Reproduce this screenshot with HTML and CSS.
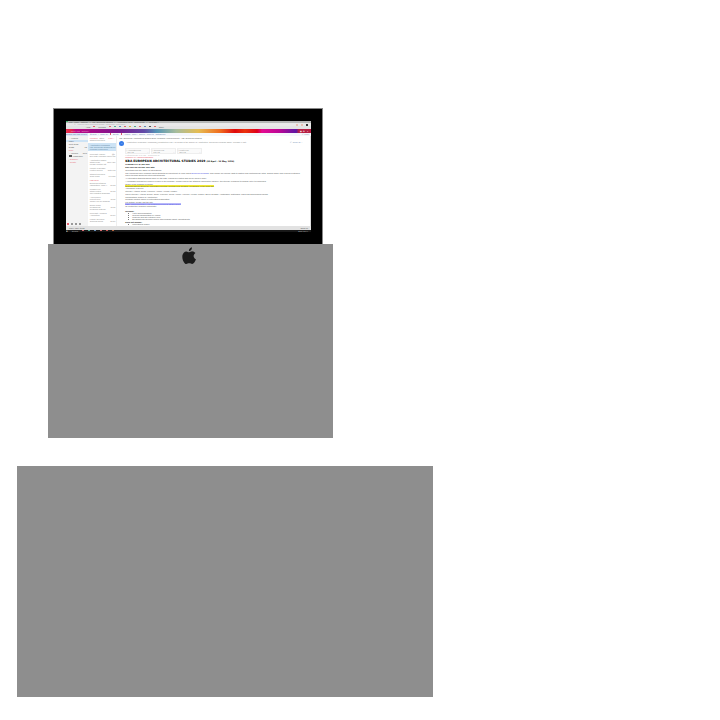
FILE: index.html
```html
<!DOCTYPE html>
<html lang="en">
<head>
<meta charset="utf-8">
<title>Mail on desktop</title>
<link rel="stylesheet" href="styles.css">
</head>
<body>
<main class="page">
<section class="computer">
<div class="monitor">
<div class="screen">
<div class="tabs"><i class="dot"></i><span>Mail - Inbox - Outlook &nbsp; × &nbsp; KBA European Studies &nbsp; × &nbsp; Architecture 2019 - Documents &nbsp; × &nbsp; New Tab ×</span></div>
<div class="address"><span>← → ↻ &nbsp; outlook.office.com/owa/?realm=mail&amp;path=/mail/inbox</span><span class="extensions"><i></i><i></i><i></i></span></div>
<div class="bookmarks"><span>Apps</span><i></i><span>Courses</span><i></i><i class="green"></i><i class="blue"></i><i></i><i class="yellow"></i><i class="green"></i><i></i><i class="blue"></i><i class="dark"></i><i></i><span>Other</span></div>
<div class="banner"><b>⠿</b><span>Office 365 &nbsp; Outlook</span><span class="tools">◉ &nbsp; ✿ &nbsp; ?</span></div>
<div class="commands"><span class="search">Search Mail and People</span><span>⊕ New &nbsp; | &nbsp; Reply all</span><i></i><span>Delete</span><i></i><span>Archive &nbsp; Junk | &nbsp; Sweep &nbsp; Move to &nbsp; Categories ···</span><span class="undo">↶ Undo</span></div>
<div class="mail">
<nav class="folders">
<p>⌄ Folders</p><p class="active">Inbox</p><p>Sent Items</p><p>Drafts <b>12</b></p><p class="red">More</p><p>⌄ Groups <b>New</b></p><p><i></i> Architecture</p><p>› <span class="red">Discover</span></p><p>› <span class="red">Create</span></p>
<div class="apps"><i class="red-bg"></i><i></i><i></i><i></i></div>
</nav>
<section class="list">
<h2><span>Focused</span> &nbsp; Other <b>Filter ⌄</b></h2>
<article><p>Student Services</p></article>
<article class="selected"><p>Architecture Programs</p><p>KBA European Studies <b>11:09</b></p><p>Program news 2019</p></article>
<article><p>University Library <b>▧ ▹</b></p><p>Due date reminder <b>Mon 9:15</b></p></article>
<article><p>Architecture Office</p><p>Studio plan <b>Sun 4:20</b></p><p>Please find the list</p></article>
<article><p>Faculty of Design</p><p>Lecture series <b>Sat 6:02</b></p></article>
<article><p>Student Services</p><p>Term news <b>Fri 3:55</b></p></article>
<h3>Last week</h3>
<article><p>European Studies</p><p>Information, room 4 <b>10/12</b></p></article>
<article><p>Michael Lee</p><p>Studio notes <b>10/12</b></p><p>The updated drawings</p></article>
<article><p>Anna Moore</p><p>Project files <b>10/11</b></p><p>Thank you for sending</p></article>
<article><p>Daniel Clark</p><p>Reading list <b>10/11</b></p><p>Required material</p></article>
<article><p>University Housing</p><p>Application <b>10/10</b></p></article>
<article><p>Library Services</p><p>Opening hours <b>10/10</b></p></article>
</section>
<article class="message">
<p class="subject">KBA European Architectural Studies 2019 (Program Announcement) - KBA European Studies</p>
<div class="sender"><i>A</i><p>Architecture Programs &lt;programs@architecture.edu&gt; on behalf of the School of Architecture, European Program Office, Tuesday 9 Oct</p><b>↶ Reply all ⌄</b></div>
<div class="files"><p>▯ Application.pdf<br>&nbsp; 240 KB <b>⌄</b></p><p>▯ Itinerary.pdf<br>&nbsp; 180 KB <b>⌄</b></p><p>▯ Poster.pdf<br>&nbsp; 320 KB <b>⌄</b></p></div>
<p class="small">3 attachments (740 KB) &nbsp; Download all</p>
<p class="alert">PROGRAM ANNOUNCEMENT</p>
<h1>KBA EUROPEAN ARCHITECTURAL STUDIES 2019 <small>(30 April - 24 May, 2019)</small></h1>
<p class="strong">Program Fee: $4,950 USD</p>
<p class="strong tight">DEPOSIT DEADLINE: Nov 30th</p>
<p class="line tight">Greetings from the Office of International</p>
<p class="line">The upcoming travel program offers students an opportunity to learn about <a href="#program">European buildings</a>. This course will include visits to historic and contemporary sites, guided walks, and a series of studies.</p>
<p class="line none">Travel through European cities with students.</p>
<p class="line">All interested students should apply by the date. Places are limited and will be filled in order.</p>
<p class="line">A refundable deposit will reserve a place in the program. Please read all the attached information carefully; the itinerary is subject to change until it is confirmed.</p>
<p class="line">Space in the program is limited.</p>
<p class="line none"><mark>Students should attend the information meeting. Meeting is on Tuesday, 16 October, in the main hall.</mark></p>
<p class="line none">Attendance required</p>
<p class="line">Itinerary: Athens, Rome, Florence, Venice, Vienna, Prague</p>
<p class="line">Travel Itinerary: Athens, Delphi, Rome, Florence, Siena, Venice, Vicenza, Vienna, Prague, Berlin, Dessau, Amsterdam, Rotterdam, Paris and surrounding regions.</p>
<p class="line">Coordinators: School of Architecture</p>
<p class="line none">Program contact: Office of International Education</p>
<p class="line">For details, please visit the site:</p>
<p class="line none"><a class="site" href="#apply">https://www.architecture.edu/programs/european-studies-2019</a></p>
<p class="line none">Or contact the program coordinator</p>
<p class="strong space">Includes:</p>
<ul><li>Hotel accommodation</li><li>Ground transportation by coach</li><li>Museum and site entrance fees</li><li>Breakfast and welcome dinner with program faculty and students</li></ul>
<p class="strong tight">Does not include:</p>
<ul><li>International airfare</li></ul>
</article>
</div>
<div class="status"><span>Inbox: 1204 items</span><span>Show all</span></div>
<div class="taskbar"><b>⊞</b><span>Search</span><i></i><i class="green"></i><i class="blue"></i><i></i><i class="red-bg"></i><i class="orange-bg"></i><span class="clock">ENG 12:44</span></div>
</div>
</div>
<div class="stand">
<svg class="apple" viewBox="0 0 14 17" role="img" aria-label="Apple"><path d="M9.800.2C10 2.200 8.600 4 6.800 4.100 6.500 2.300 8 .5 9.800.2Z"/><path d="M7 5.200C8 5.200 8.900 4.200 10.300 4.300c1.200 0 2.200.6 2.900 1.600-2.600 1.700-2.300 5 .5 6.200C12.900 14.500 11.500 16.700 10 16.700c-1.100 0-1.600-.7-2.900-.7-1.300 0-1.900.7-2.900.7C2.600 16.700.3 13 .3 9.500c0-3.300 2-5.200 4-5.200C5.500 4.300 6.400 5.200 7 5.200Z"/></svg>
</div>
</section>
<div class="panel"></div>
</main>
</body>
</html>
```
FILE: styles.css
```css
* { box-sizing: border-box; }
body { margin: 0; background: #fff; color: #555; font: 2px/2px "Liberation Sans", Arial, sans-serif; }
p, h1, h2, h3, ul { margin: 0; padding: 0; font-size: inherit; font-weight: normal; white-space: nowrap; }
i { font-style: normal; }
.page { padding-top: 15%; }
.computer { width: 39.600%; margin-left: 6.700%; }
.monitor { width: 94.800%; margin-left: 1.600%; aspect-ratio: 270 / 136; padding: 12px 11px 12px 12px; background: #000; border: 1px solid #888; border-bottom: 0; }
.screen { height: 100%; display: flex; flex-direction: column; overflow: hidden; background: #fff; }
.stand { background: #8e8e8e; aspect-ratio: 285 / 194; padding-top: 3px; }
.apple { display: block; width: 5%; margin-left: 47%; fill: #1b1b1b; }
.panel { width: 57.800%; margin: 28px 0 0 2.400%; aspect-ratio: 416 / 231; background: #8e8e8e; }
.tabs { height: 2px; background: #b5b7b6; color: #555; display: flex; gap: 1px; flex: none; white-space: nowrap; }
.dot { width: 2px; height: 1px; background: #47b96f; }
.address { height: 3px; flex: none; background: #e9e9e9; display: flex; justify-content: space-between; color: #aaa; padding: 0 3px; white-space: nowrap; }
.extensions { display: flex; gap: 3px; padding-top: 1px; }
.extensions i { width: 2px; height: 2px; background: #e8c2b4; }
.extensions i:last-child { background: #333; }
.red { color: #e66070; }
.bookmarks { height: 3px; flex: none; background: #e4e4e4; display: flex; gap: 3px; padding-left: 20px; }
.bookmarks i, .taskbar i { width: 2px; height: 1px; background: #d76b70; }
.bookmarks .green, .taskbar .green { background: #56a894; }
.bookmarks .blue, .taskbar .blue { background: #668fb8; }
.bookmarks .yellow { background: #d3ad51; }
.bookmarks .dark { background: #555; }
.banner { height: 4px; flex: none; padding: 1px 0 0; background: linear-gradient(90deg, #e62949 0 2%, #c00784 4%, #7b168e 21%, #614ba8 32%, #5695b6 37%, #a7bd9d 45%, #e5bd53 54%, #f06b1e 63%, #df090c 69%, #ea320d 73%, #df001a 78%, #e40b91 80%, #bc0696 87%, #5c16a4 94%, #b72045 95%); color: #e6a6ca; display: flex; gap: 4px; }
.tools { margin: 0 3px 0 auto; color: #fff; }
.commands { height: 3px; flex: none; display: flex; gap: 2px; background: #f5f7fc; color: #5d77a4; white-space: nowrap; }
.search { width: 22px; background: #dde6f5; }
.commands i { width: 1px; height: 2px; background: #d85267; }
.undo { margin: 0 2px 0 auto; color: #99a; }
.mail { flex: 1; min-height: 0; display: grid; grid-template-columns: 9% 12% 1fr; }
.folders { display: flex; flex-direction: column; background: #f3f3f3; padding-top: 1px; }
.folders p { height: 2px; padding-left: 3px; margin-bottom: 1px; }
.folders p b, .list b { float: right; margin-right: 1px; font-weight: normal; }
.folders .active { background: #cde3f5; }
.folders i { display: inline-block; width: 3px; height: 2px; background: #555; }
.folders .apps { margin-top: auto; padding: 1px; display: flex; gap: 2px; }
.folders .apps i { width: 2px; height: 2px; background: #999; }
.folders .apps .red-bg { background: #e66070; }
.list { overflow: hidden; border-right: 1px solid #eee; color: #888; }
.list h2, .list h3 { padding-left: 2px; height: 3px; }
.list h2 { padding-top: 1px; }
.list h2 span, .list h2 b, .list h3 { color: #e45868; }
.list article { padding-left: 2px; margin-bottom: 2px; }
.list .selected { background: #cde3f5; padding-top: 1px; padding-bottom: 1px; color: #6183a0; }
.message { overflow: hidden; padding: 1px 7px 0 8px; border-right: 1px solid #ddd; }
.subject { margin-left: -6px; }
.sender { margin: 2px 0 0 -6px; display: flex; gap: 2px; height: 5px; color: #888; }
.sender i { width: 5px; height: 5px; border-radius: 50%; background: #367be8; color: #fff; text-align: center; line-height: 5px; }
.sender b { margin-left: auto; font-weight: normal; color: #6481aa; }
.files { display: flex; gap: 1px; margin-top: 2px; color: #999; }
.files p { width: 14%; border: 1px solid #eee; background: #fafafa; }
.files b { float: right; }
.small { color: #bbb; }
.alert { color: #e45868; }
h1 { margin-top: 1px; color: #000; font: bold 3px/4px "DejaVu Sans", sans-serif; }
h1 small { font-size: 2px; }
.strong { font-weight: bold; color: #111; }
.line { margin-top: 1px; }
.tight { margin-top: 1px; }
.space { margin-top: 3px; }
.none { margin-top: 0; }
mark { background: #f0ea30; color: #554; }
a { color: #4545dd; text-decoration: none; }
.site { background: #b8b8fa; }
ul { padding-left: 3px; list-style-position: inside; }
.status { height: 4px; flex: none; background: #e2e2e2; display: flex; justify-content: space-between; padding: 1px 3px; }
.taskbar { height: 2px; flex: none; background: #181818; color: #bbb; display: flex; gap: 4px; white-space: nowrap; }
.taskbar .red-bg { background: #c75552; }
.taskbar .orange-bg { background: #b5643d; }
.clock { margin: 0 3px 0 auto; }
```
